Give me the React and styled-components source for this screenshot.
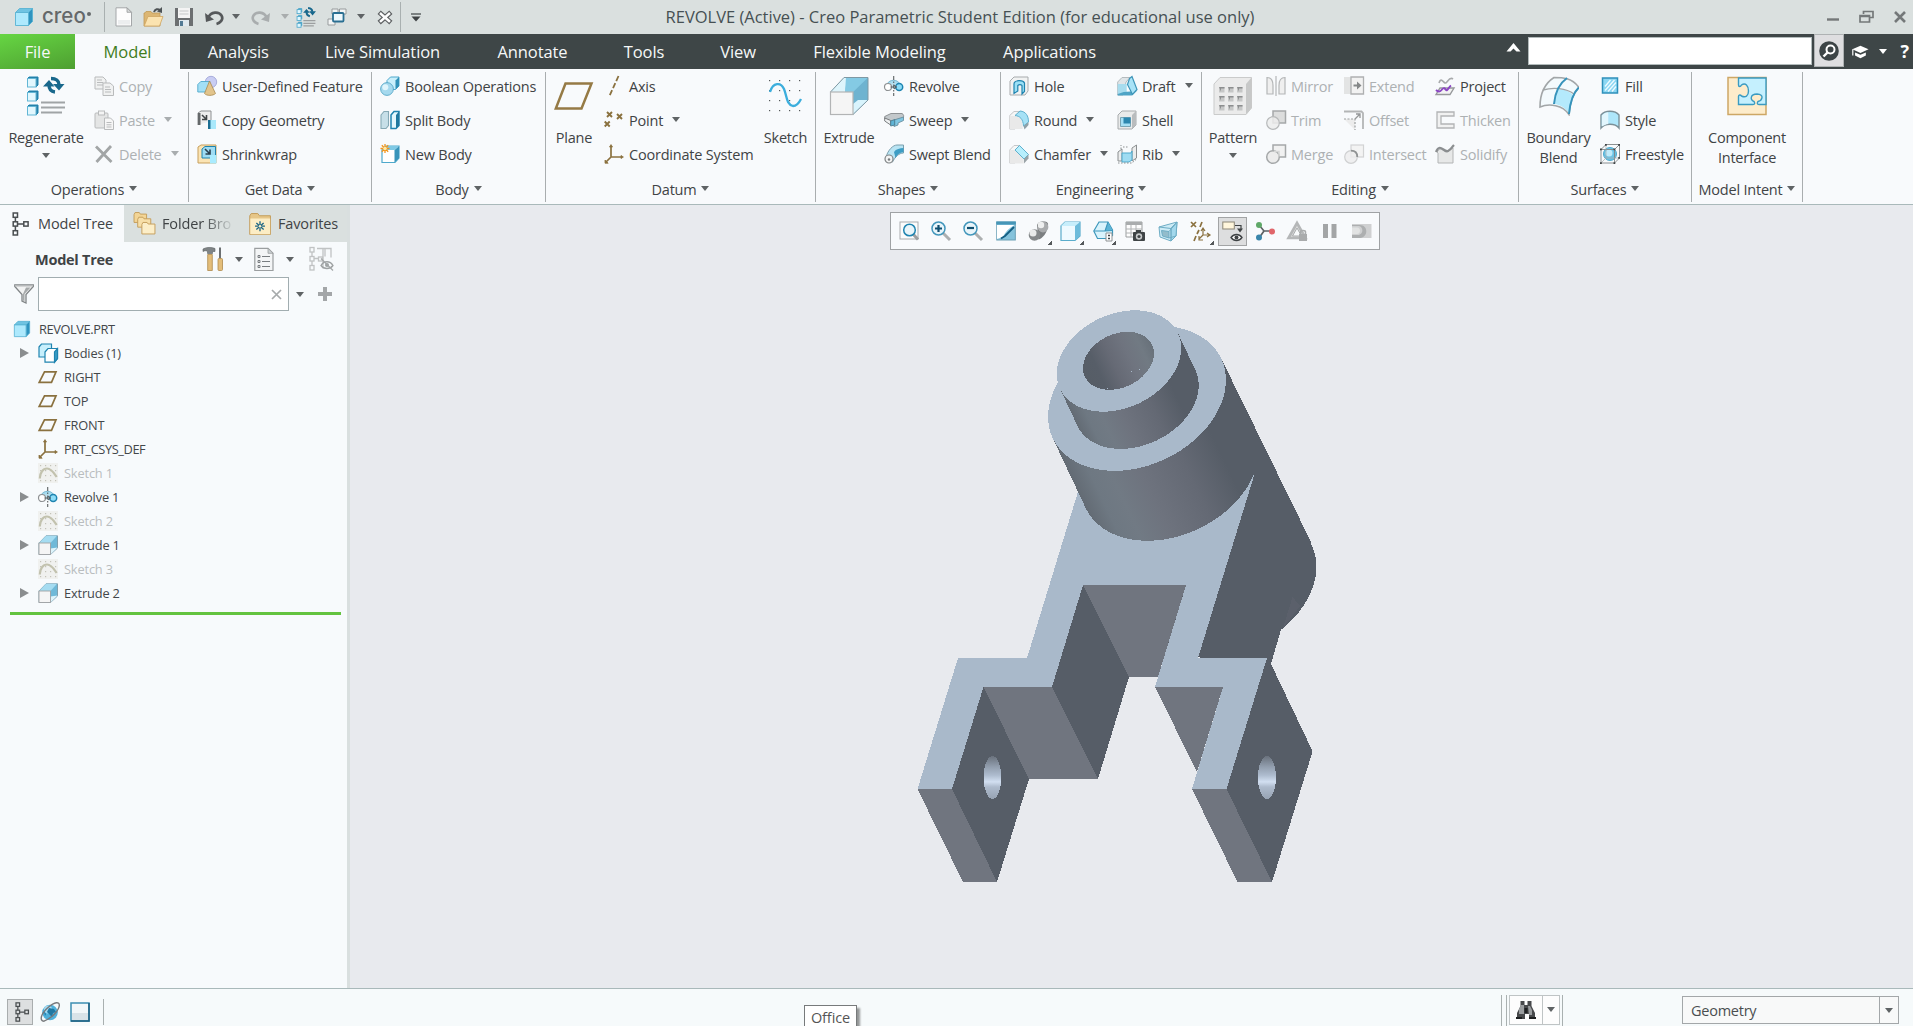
import React from "react";
import styled, { createGlobalStyle } from "styled-components";

const Global = createGlobalStyle`
  * { box-sizing: border-box; }
  html, body { margin: 0; padding: 0; overflow: hidden; }
  body { font-family: "Open Sans", "Noto Sans", sans-serif; color: #3f4345; }
  svg { display: block; flex: none; }
`;

/* ---------- palette ---------- */
const B = "#1f84b0";
const B2 = "#4fa9cc";
const G = "#b9bbbc";
const BR = "#8a713f";

/* ---------- drawings ---------- */
const Cube = ({ x = 1, y = 1, s = 17, d = 4, front = "#aee9fd", side = "#2f93bf", top = "#6fc3e2", line = "#58b2d3" }) => (
  <g strokeWidth="0.9" strokeLinejoin="round">
    <path d={`M${x} ${y + d} l${d} ${-d} h${s - d} l${-d} ${d} z`} fill={top} stroke={line} />
    <path d={`M${x + s - d} ${y + d} l${d} ${-d} v${s - d} l${-d} ${d} z`} fill={side} stroke={line} />
    <rect x={x} y={y + d} width={s - d} height={s - d} fill={front} stroke={line} />
  </g>
);

const art = {
  part: <Cube x={1.5} y={1.5} />,
  fileNew: (
    <g>
      <path d="M2 .8h11l4.500 4.500V19H2z" fill="#fdfdfd" stroke="#a4a7a9" />
      <path d="M13 .8v4.500h4.500z" fill="#d7dadb" stroke="#97999b" strokeWidth=".8" />
      <path d="M4 13h12v4.500H4z" fill="#eceeef" />
    </g>
  ),
  open: (
    <g>
      <path d="M1 19V6h1l1-1.500h5l1 1.500h8v13z" fill="#dcb673" stroke="#c29a55" strokeWidth=".8" />
      <path d="M1.200 19L5 9.500h15L16.500 19z" fill="#fbe3b0" stroke="#cfa662" strokeWidth=".8" />
      <path d="M11 5c1-3 4-3.500 6-2" fill="none" stroke="#4e5355" strokeWidth="2" />
      <path d="M19 0v6l-5-1.500z" fill="#4e5355" />
    </g>
  ),
  save: (
    <g>
      <rect x="1" y="1" width="18" height="18" fill="#6c6f71" />
      <rect x="4" y="1" width="12" height="10" fill="#f4f4f4" />
      <path d="M5.500 4h9M5.500 7h9" stroke="#c6c8c9" />
      <rect x="5" y="13" width="10" height="6" fill="#dfe8ee" />
      <rect x="6" y="14" width="3" height="5" fill="#527a94" />
    </g>
  ),
  undo: (
    <g>
      <path d="M4 11C7 4 15 4.500 17.500 8.500S16 16 12.500 17" fill="none" stroke="#55585a" strokeWidth="2.600" />
      <path d="M1 6l1 9 8-2.500z" fill="#55585a" />
    </g>
  ),
  redo: (
    <g>
      <path d="M16 11C13 4 5 4.500 2.500 8.500S4 16 7.500 17" fill="none" stroke="#a9adae" strokeWidth="2.600" />
      <path d="M19 6l-1 9-8-2.500z" fill="#a9adae" />
    </g>
  ),
  regenSmall: (
    <g>
      {[1.5, 8, 14.5].map((y) => (
        <g key={y}>
          <path d={`M1.500 ${y + 1}l1-1h3v3l-1 1`} fill={B} stroke={B2} strokeWidth=".8" />
          <rect x="1" y={y + 1} width="3.800" height="3.800" fill="#dff6fe" stroke={B2} strokeWidth=".8" />
        </g>
      ))}
      <path d="M10 4.500c0 2.500 1 3.800 3.200 4.300M15.500 4.500c0-2-1.500-3.200-4-3.500" fill="none" stroke="#17678c" strokeWidth="1.900" />
      <path d="M6.800 5.500h6.400L10 2zM12.500 4h6.500l-3.200 4z" fill="#17678c" />
      <path d="M7 13h11.500M7 15.500h11.500M7 18h10" stroke="#9c9fa0" strokeWidth="1.200" />
    </g>
  ),
  windows: (
    <g>
      <path d="M5 2h6v5H5zM12.500 2H19v5h-6.500zM1 12h7v6H1z" fill="#f3f5f5" stroke="#989c9d" />
      <rect x="6" y="6" width="10.500" height="8.500" rx="1" fill="#eef8fc" stroke="#2a6f92" strokeWidth="1.800" />
    </g>
  ),
  closeBox: (
    <g fill="none" strokeLinecap="square">
      <path d="M5.500 6.500l9 8M14.500 6.500l-9 8" stroke="#5d6062" strokeWidth="5.400" />
      <path d="M5.500 6.500l9 8M14.500 6.500l-9 8" stroke="#fdfdfd" strokeWidth="2.800" />
    </g>
  ),
  copy: (
    <g fill="#f0f1f1" stroke={G}>
      <path d="M1 1h8l3 3v9H1z" />
      <path d="M3 4h5M3 6.500h6M3 9h6" />
      <path d="M9 7h7l3.500 3v9.500H9z" />
      <path d="M11 11h5M11 13.500h6M11 16h6" />
    </g>
  ),
  paste: (
    <g fill="#e4e5e5" stroke={G}>
      <rect x="1" y="3" width="13" height="15" rx="1" />
      <rect x="4.500" y="1" width="6" height="4" fill="#f4f4f4" />
      <path d="M10.500 8h6l3 3v8.500h-9z" fill="#f6f6f6" />
      <path d="M12.500 12.500h5M12.500 14.800h5M12.500 17h5" />
    </g>
  ),
  del: <path d="M2 2.500L17.500 18M17 2L2.500 18" stroke="#a2a5a6" strokeWidth="2.800" fill="none" />,
  udf: (
    <g>
      <circle cx="14" cy="6" r="5.700" fill="#c9cdf3" stroke="#9aa0d4" strokeWidth=".8" />
      <path d="M.8 8.500l3-3h9v8l-2.500 2.500H.8z" fill="#a3dff5" stroke={B2} strokeWidth=".9" />
      <path d="M12.500 5L7.500 17.500c2 2.500 8.500 2.500 11 0z" fill="#e2c48c" stroke="#a98a50" strokeWidth=".8" />
    </g>
  ),
  copyGeom: (
    <g>
      <path d="M1 15V3l3-2h10v10" fill="#ededee" stroke="#8c8f91" />
      <path d="M1 3h2.500v12H1z" fill="#64686a" />
      <path d="M5 5l4 4M9.500 5v4.500H5" stroke="#404446" strokeWidth="1.600" fill="none" />
      <path d="M11 19V10h8v9z" fill="#a9e8fb" />
      <path d="M11 19v-9h2.500v9z" fill="#1c6e93" />
    </g>
  ),
  shrink: (
    <g>
      <path d="M1 19V3l3-2h15v18z" fill="#fbe4b4" stroke="#c79f5c" />
      <path d="M5 14V5l3-2.500h10.500V14z" fill="#9fdcf3" stroke={B} />
      <path d="M8 5l5 5M13 5.500V10H8.500" stroke="#2b4150" strokeWidth="1.600" fill="none" />
      <path d="M13 11h6.500v8.500H13z" fill="#a9ebff" />
    </g>
  ),
  boolean: (
    <g>
      <path d="M7 4.500l3.500-3.500H19v9l-3.500 3.500H7z" fill="#c9effb" stroke={B2} />
      <path d="M15.500 4.500L19 1v9l-3.500 3.500z" fill="#3191b8" />
      <circle cx="7" cy="13" r="6.400" fill="#a5d9ee" stroke="#4a9fc2" strokeWidth=".8" />
      <circle cx="5.300" cy="11.200" r="3" fill="#e0f5fc" />
    </g>
  ),
  split: (
    <g strokeWidth="1.100">
      <path d="M1 5l3-3.500h4.500v14L6 18.500H1z" fill="#c7dfe8" stroke="#86a9b5" />
      <path d="M11 5l3-3.500h5v14L16 18.500h-5z" fill="#e3f7fd" stroke={B} strokeWidth="1.500" />
      <path d="M16 5l3-3.500v14l-3 3z" fill="#1f789f" />
    </g>
  ),
  newBody: (
    <g>
      <path d="M2 6l4-4h13v12l-4 4.500H2z" fill="#fff" stroke={B2} strokeWidth="1.200" />
      <path d="M14.500 6L19 2v12l-4.500 4.500z" fill="#3994ba" />
      <path d="M2 6l4-4h13l-4.500 4z" fill="#7fc9e5" />
      <path d="M5 0v9M.5 4.500h9M1.800 1.300l6.400 6.400M8.200 1.300L1.800 7.700" stroke="#f2951d" strokeWidth="1.300" />
      <circle cx="5" cy="4.500" r="1.800" fill="#ffe9a3" />
    </g>
  ),
  axis: <path d="M14.500 0L5.500 20" stroke={BR} strokeWidth="1.800" strokeDasharray="5.500 2.300" />,
  point: (
    <path d="M3 2l5 5M8 2L3 7M13 4l5 5M18 4l-5 5M.7 11.500l5 5M5.700 11.500l-5 5" stroke={BR} strokeWidth="1.900" fill="none" />
  ),
  csys: (
    <g stroke={BR} strokeWidth="1.700" fill="none">
      <path d="M7 2v11h11M7 13l-5.500 5.500" />
      <path d="M5.500 3L7 .6 8.500 3zM17 11.500l2.400 1.500-2.400 1.500zM1 16l0 3.200 3.200 0z" fill={BR} strokeWidth=".8" />
    </g>
  ),
  revolve: (
    <g>
      <path d="M3 8c3-5 10-5 13 0" fill="#a7dcf0" stroke="#76b6cf" />
      <path d="M4 7.500h11v5H4z" fill="#bfe4f1" />
      <circle cx="4" cy="11" r="3.500" fill="#fff" stroke="#8d9092" strokeWidth="1.200" />
      <circle cx="15.200" cy="11" r="3.500" fill="#8dddf8" stroke={B} strokeWidth="1.500" />
      <path d="M9.700 0v20" stroke="#5c6062" strokeDasharray="4 1.500 1.500 1.500" strokeWidth="1.100" />
      <path d="M6.500 11h6M10 9l2.500 2L10 13" stroke="#5a5e60" fill="none" />
    </g>
  ),
  sweep: (
    <g strokeWidth=".9">
      <path d="M.7 6.500L7 3.500h11c2 1 2 3 1 4.500l-6 1.500-5 2L.7 8.500z" fill="#c3c8cb" stroke="#85898b" />
      <path d="M10 10l9.500-3v3.500L14 13v2l-4 1.500z" fill="#7fc6e2" stroke="#6b8f9f" />
      <path d="M.7 8v3l6 4v-4.500z" fill="#eef0f1" stroke="#6e7274" />
      <path d="M6.700 11l4-1.500v5.500l-4 1z" fill="#5fb4d6" stroke="#4c7c90" />
    </g>
  ),
  sweptBlend: (
    <g>
      <path d="M2 13C4 6 9 1 13 1h6.500v8C15 9 11 13 8.500 18z" fill="#b9e4f3" stroke="#7b9fae" />
      <path d="M10 8C12 5 16 4 19.500 4v4c-4 .5-6.500 3-8 6z" fill="#3d9dc4" />
      <circle cx="5" cy="15" r="4" fill="#f3f4f4" stroke="#808486" strokeWidth="1.200" />
      <circle cx="5" cy="15.500" r="1.200" fill="#777b7d" />
    </g>
  ),
  hole: (
    <g>
      <path d="M1 19V5l4-4h14v14l-3 4z" fill="#f1f2f2" stroke="#a8abad" />
      <path d="M5 8c0-4 9-4.500 10.500-1v8.500L13 18V9.500c-1-1.300-3-1.300-4.200 0V15L5 17.500z" fill="#9be0f6" stroke={B} strokeWidth="1.200" />
    </g>
  ),
  round: (
    <g>
      <path d="M.7 5.500L5 1.500h6L6 6v13H.7z" fill="#f6f6f6" stroke="#c5c7c9" />
      <path d="M.7 6h5c6 0 8 5 8 13H.7z" fill="#e9e9e9" />
      <path d="M6 5.500L11 1c6 .5 8.500 5 8.500 11l-5 4C14 9 11 6 6 5.500z" fill="#a5e1f6" stroke="#5fb0ce" />
      <path d="M14.500 16l5-4v3l-4 4.500z" fill="#8ea0a8" />
    </g>
  ),
  chamfer: (
    <g>
      <path d="M.7 6L5 1.500h6L6 6v13H.7z" fill="#f6f6f6" stroke="#c5c7c9" />
      <path d="M.7 6h5l9 8v5.500H.7z" fill="#e9e9e9" />
      <path d="M6 6l4.500-4.500 9 9-4.500 4.500z" fill="#b7effd" stroke="#5fb0ce" />
      <path d="M15 15l4.500-4.500v4L15 19.500z" fill="#9aa3a7" />
    </g>
  ),
  draft: (
    <g>
      <path d="M.7 6L5 1.500h8L9 6l-3 13H.7z" fill="#dfe5e8" stroke="#b4bbbe" />
      <path d="M.7 8h9v8.500L.7 18z" fill="#a7dcee" />
      <path d="M.7 18l6-2 13-1-5 4.500H.7z" fill="#4ea4c6" />
      <path d="M12.500 2.500l2.500-2 5 13-4.500 5-5-10z" fill="#a9e3f7" stroke="#3e95b8" strokeWidth="1.200" />
    </g>
  ),
  shell: (
    <g>
      <path d="M1 19V5l4-4h14v14l-4 4z" fill="#e9eaea" stroke="#a8abad" />
      <path d="M15 5l4-4v14l-4 4z" fill="#b9bcbe" />
      <path d="M3.500 7.500h10v9h-10z" fill="#a6e0f5" stroke="#7ba5b5" />
      <path d="M6.500 7.500h7v6h-7z" fill="#2c87af" />
    </g>
  ),
  rib: (
    <g>
      <path d="M1 8l4-3v12H1zM15 4l4.500-3v13L15 17z" fill="#eceded" stroke="#8b8f91" />
      <path d="M5 9h9l1-2v9l-3 2H5z" fill="#9fdcf2" stroke={B2} />
      <path d="M1 19h14l4.500-4M4 5V1M6 3h6" stroke="#8b8f91" strokeDasharray="1.500 1.500" fill="none" />
    </g>
  ),
  mirror: (
    <g fill="#efefef" stroke="#b4b6b7" strokeWidth="1.200">
      <path d="M1 1.500c5 0 6 4 6 8V18H1zM19 1.500c-5 0-6 4-6 8V18h6z" />
      <path d="M10 0v20" fill="none" />
    </g>
  ),
  trim: (
    <g stroke="#b7b9ba" strokeWidth="1.200">
      <rect x="7" y="1" width="12.500" height="12" fill="#dcdddd" stroke="#a5a8a9" strokeWidth="1.500" />
      <circle cx="7" cy="13" r="6.300" fill="#ececec" fillOpacity=".85" />
    </g>
  ),
  merge: (
    <g stroke="#a5a8a9" strokeWidth="1.500">
      <rect x="7" y="1" width="12.500" height="12" fill="#f1f1f1" />
      <circle cx="7" cy="13" r="6.300" fill="#ececec" />
      <path d="M8 7.500h5v5" fill="none" stroke="#d5d6d6" />
    </g>
  ),
  intersect: (
    <g strokeWidth="1.200">
      <rect x="7" y="1" width="12.500" height="12" fill="#f3f3f3" stroke="#d2d3d4" />
      <circle cx="7" cy="13" r="6.300" fill="#ececec" fillOpacity=".8" stroke="#cfd0d1" />
      <path d="M7 6.700c4 0 6.300 2.500 6.300 6.300" stroke="#8f9293" fill="none" strokeWidth="1.800" />
    </g>
  ),
  extend: (
    <g>
      <rect x="0" y="1" width="8" height="17" fill="#e3e4e4" />
      <path d="M7 1h12.500v17H7z" fill="#f2f2f2" stroke="#aeb0b1" strokeWidth="1.300" />
      <path d="M9.500 9.500h5" stroke="#858889" strokeWidth="2" />
      <path d="M13 5.500l4.500 4-4.500 4z" fill="#858889" />
    </g>
  ),
  offset: (
    <g>
      <path d="M0 1.500h17.500l1.500 1.500V19" fill="none" stroke="#b3b5b6" strokeWidth="1.800" />
      <path d="M0 9h11v11" fill="#ececec" stroke="#9c9fa0" strokeDasharray="2 1.500" strokeWidth="1.200" />
      <path d="M11 9l5-5M12 4h4v4" fill="none" stroke="#949798" strokeWidth="1.300" />
    </g>
  ),
  project: (
    <g fill="none">
      <path d="M4 7c2-6 4-1 6 0s4-7 8-4" stroke="#a8aaac" strokeWidth="1.600" />
      <path d="M1 18.500L5 12h14l-4 6.500z" stroke="#97999b" strokeWidth="1.400" fill="#f3f3f3" />
      <path d="M1 14c2 2 4 2 6-.5s3-1 4 .5 3-3 5-4.500" stroke="#8b46c4" strokeWidth="1.900" />
    </g>
  ),
  thicken: (
    <path d="M2 2h17v4H6v8h13v4H2z" fill="#f1f1f1" stroke="#b2b4b5" strokeWidth="1.300" />
  ),
  solidify: (
    <g>
      <path d="M2 8c4-7 7 1 10 0s3-3 6-4v15H3V9z" fill="#e7e8e8" stroke="#b2b4b5" />
      <path d="M1 8C5-2 9 9 13 7s3-3 6-6" fill="none" stroke="#8b8e90" strokeWidth="2.200" />
    </g>
  ),
  fill: (
    <g>
      <rect x="2.500" y="2" width="15" height="15" fill="#8cd7f3" stroke="#2f90ba" strokeWidth="1.500" />
      <path d="M5 10.500L10.500 4M5 14.500L14.500 4M8 15.500l8-9M12 15.500l4-5" stroke="#eefaff" strokeWidth="1.300" />
    </g>
  ),
  style: (
    <g>
      <path d="M1 5c4-5 14-5 18 0v13c-4-5-14-5-18 0z" fill="#aee6fa" stroke="#7b8f97" strokeWidth="1.400" />
      <path d="M1.800 5.500c2-2.300 4.500-3 6.500-3.200V14c-2.200.3-4.500 1.300-6.500 2.500z" fill="#e2f6fd" />
    </g>
  ),
  freestyle: (
    <g>
      <circle cx="10" cy="10" r="6.500" fill="#6cc4e6" stroke={B2} />
      <circle cx="9" cy="9" r="3.500" fill="#bfeafa" />
      <path d="M1 5.500l5-5h13.500V14l-5 5H1zM1 5.500h13.500V19M14.500 5.500l5-5" fill="none" stroke="#808486" strokeWidth=".9" />
      <path d="M6 .5V14M6 14L1 19M6 14h13.500" fill="none" stroke="#a9acad" strokeWidth=".7" />
      <path d="M0 4.500h1.800v1.800H0zM13.500 4.500h1.800v1.800h-1.800zM18.200 0H20v1.800h-1.800zM5 0h1.800v1.800H5zM0 18.200h1.800V20H0zM13.500 18.200h1.800V20h-1.800zM18.200 13H20v1.800h-1.800z" fill="#3f4345" />
    </g>
  ),
  extrudeSmall: (
    <g strokeWidth=".9">
      <path d="M1 8L8 .8h11.500V13l-7 6.500H1z" fill="#6fb9d8" stroke="#7a9aa7" />
      <path d="M1 8L8 .8h11L12.500 8z" fill="#a5dcf1" />
      <path d="M12.500 19.500v-6l7-1z" fill="#def4fb" />
      <rect x="1" y="8" width="11.500" height="11.500" fill="#f5f5f5" stroke="#9fa2a4" />
    </g>
  ),
  plane: <path d="M6.500 4.800H18l-4.500 10.500H1.200z" fill="none" stroke={BR} strokeWidth="1.700" />,
  bodies: (
    <g strokeWidth="1.200" stroke={B}>
      <path d="M1 4l2.500-3h10v9l-3 4H1z" fill="#c7effc" />
      <path d="M7 9l3-3.500h9.500v10l-3 3.700H7z" fill="#fff" />
      <path d="M16.500 9l3-3.500v10l-3 3.700z" fill="#3a9cc4" />
    </g>
  ),
  sketchDim: (
    <g>
      <rect width="20" height="20" fill="#f0f1ef" />
      {[2, 7, 12, 17].map((x) => [2, 7, 12, 17].map((y) => <rect key={x + "-" + y} x={x} y={y} width="1.200" height="1.200" fill="#c3c3b8" />))}
      <path d="M1.800 15.500C2 9.500 5 5.500 9 5.500c4.500 0 7 4.500 9.700 8.500" fill="none" stroke="#c2c2ae" strokeWidth="2.200" />
    </g>
  ),
  treeIcon: (
    <g fill="none" stroke="#4a4e50" strokeWidth="1.500">
      <rect x="1.200" y="-1" width="4.300" height="4.300" />
      <rect x="1.200" y="7.800" width="4.300" height="4.300" />
      <rect x="1.200" y="16.700" width="4.300" height="4.300" />
      <rect x="11.800" y="7.800" width="4.300" height="4.300" />
      <path d="M3.400 3.300v4.500M3.400 12.100v4.600M5.500 10h6.300" />
    </g>
  ),
  folders: (
    <g stroke="#c39d5b" strokeWidth=".9">
      <path d="M0 1.500l1-2h4l1 1.500h6v8H0z" fill="#f3d596" />
      <path d="M3.500 6l1-2h4l1 1.500h6.500v8H3.500z" fill="#f7dfa9" />
      <path d="M7.500 11l1-2h4l1 1.500H20V20H7.500z" fill="#fceec8" />
    </g>
  ),
  favorites: (
    <g>
      <path d="M.7 2.500L2 .5h6L9.500 2.500h10v17H.7z" fill="#e6c688" stroke="#c39d5b" strokeWidth=".9" />
      <rect x="1.200" y="5" width="18" height="14.300" fill="#fcedc5" />
      <path d="M10 7.500v9M6.700 9l6.600 6M13.300 9l-6.600 6M5.500 12h9" stroke="#1c6584" strokeWidth="1.200" />
      <circle cx="10" cy="12" r="1.200" fill="#fcedc5" />
    </g>
  ),
  tools: (
    <g>
      <path d="M0 1.500c3-2 9-2 12-.5v3h-2.500v2h-5V4c-1-1-3-1-4.500 0z" fill="#7f8486" stroke="#5d6163" strokeWidth=".6" />
      <path d="M4.700 7h4.600v16H4.700z" fill="#e3bd79" stroke="#ae8a4c" strokeWidth=".8" />
      <path d="M17 0v11" stroke="#6c7072" strokeWidth="2" />
      <rect x="15" y="11" width="4.500" height="12" rx="1" fill="#e3bd79" stroke="#ae8a4c" strokeWidth=".8" />
    </g>
  ),
  listDoc: (
    <g>
      <path d="M.8.8H14l5 5V23H.8z" fill="#f3f5f6" stroke="#9a9ea0" strokeWidth="1.200" />
      <path d="M14 .8v5h5z" fill="#cdd2d4" stroke="#9a9ea0" strokeWidth=".8" />
      <path d="M8 9h8M8 14h8M8 19h8" stroke="#787d80" strokeWidth="1.200" />
      <path d="M4 8h2v2H4zM4 13h2v2H4zM4 18h2v2H4z" fill="none" stroke="#787d80" />
    </g>
  ),
  treeEye: (
    <g fill="none" stroke="#c0c3c4" strokeWidth="1.300">
      <rect x="1" y="0" width="4" height="4.500" />
      <rect x="1" y="9" width="4" height="4.500" />
      <rect x="1" y="18" width="4" height="4.500" />
      <path d="M3 4.500V9M3 13.500V18M5 11h5M8 1h6v20M8 1h14v9M16 1v8" />
      <rect x="9.500" y="9.500" width="4" height="4" />
      <path d="M12 18c3-5 9-5 12 0-3 4-9 4-12 0z" stroke="#9ea2a3" />
      <circle cx="18" cy="17.500" r="2" fill="#9ea2a3" stroke="none" />
      <path d="M12 11l12 12" stroke="#a3a7a8" />
    </g>
  ),
  funnel: (
    <g>
      <path d="M.8 1h18.500v1.500L12 10.500V19l-4-2v-6.500L.8 2.500z" fill="#f1f2f2" stroke="#818587" strokeWidth="1.300" />
      <path d="M1 1h18v1.500H1z" fill="#b6b9ba" />
      <path d="M10.500 10l6-6.500H12L9 10v6.500l1.500.8z" fill="#a6a9aa" />
    </g>
  ),
  zoomFit: (
    <g>
      <rect x="1" y="1" width="18" height="17" fill="#fcfcfc" stroke="#a9acae" />
      <path d="M14 13l5 5.500" stroke="#9c9fa1" strokeWidth="3" />
      <circle cx="10.500" cy="9" r="5.800" fill="#e9f5fa" stroke={B} strokeWidth="1.500" />
    </g>
  ),
  zoomIn: (
    <g>
      <path d="M12 12l7 7" stroke="#acafb0" strokeWidth="3" />
      <circle cx="7.500" cy="7.500" r="6.500" fill="#e9f5fa" stroke="#4296bb" strokeWidth="1.500" />
      <path d="M7.500 4v7M4 7.500h7" stroke="#104f70" strokeWidth="2.200" />
    </g>
  ),
  zoomOut: (
    <g>
      <path d="M12 12l7 7" stroke="#acafb0" strokeWidth="3" />
      <circle cx="7.500" cy="7.500" r="6.500" fill="#e9f5fa" stroke="#4296bb" strokeWidth="1.500" />
      <path d="M4 7h7" stroke="#104f70" strokeWidth="2.200" />
    </g>
  ),
  repaint: (
    <g>
      <rect x=".8" y="1" width="18.500" height="18" fill="#85c3dc" stroke="#6a9fb4" />
      <rect x=".3" y=".5" width="19.500" height="3" fill="#4796b7" />
      <path d="M1 4h17.500C13 7 9 11 7 16l-6 2z" fill="#fff" />
      <path d="M18 6L9 15l-4 2.500" stroke="#155f83" strokeWidth="1.800" fill="none" />
    </g>
  ),
  display: (
    <g>
      <path d="M9 4c1-3 4-4 6-3.500 5 0 6 2 4.500 5 0 6-5 12-9 13z" fill="#7b7e80" />
      <circle cx="15" cy="6" r="5.400" fill="#a9abad" />
      <circle cx="6.500" cy="14" r="5.800" fill="#85888a" />
      <circle cx="5" cy="12" r="3.500" fill="#e9eaea" />
      <circle cx="13" cy="4" r="3.200" fill="#eeefef" />
    </g>
  ),
  orient: (
    <g>
      <path d="M1 5l4-4h15v14l-5 4.500H1z" fill="#eefaff" stroke="#5aaccb" strokeWidth="1.200" />
      <path d="M1 5l4-4h15l-5 4z" fill="#c7eefb" />
      <path d="M15 5l5-4v14l-5 4.500z" fill="#6dbcdb" />
    </g>
  ),
  viewMgr: (
    <g>
      <path d="M.8 10L6 1h9l4.500 8v5.500L15 17.500H4.500z" fill="#d9f3fc" stroke="#3d97bb" strokeWidth="1.200" />
      <path d="M15 1l4.500 8.500L12 10z" fill="#5db4d6" />
      <path d="M1 10h11l7.500-.5M12 10l3-9" stroke="#3d97bb" strokeWidth="1.100" fill="none" />
      <path d="M13 12h6v8h-6z" fill="#fff" stroke="#8d9193" />
      <path d="M15 14.500h2M15 17.500h2" stroke="#3f4345" strokeWidth="1.500" />
    </g>
  ),
  camera: (
    <g>
      <path d="M1 1h16v15H1z" fill="#fdfdfd" stroke="#9b9e9f" />
      <path d="M1 1h16v3H1z" fill="#a9acad" />
      <path d="M1 8h16M1 12h10M6 4v12M11 4v8" stroke="#b0b3b4" />
      <rect x="8" y="11" width="12" height="9" rx="1" fill="#3f4446" />
      <circle cx="14" cy="15.500" r="3.200" fill="#c7cacb" />
      <circle cx="14" cy="15.500" r="1.600" fill="#3f4446" />
      <rect x="11" y="9" width="5" height="2.500" fill="#3f4446" />
    </g>
  ),
  perspective: (
    <g fill="#cdebf6" stroke="#6eadc5" strokeWidth="1">
      <path d="M1 6L19 1l-1 14-5 5-11-4z" />
      <path d="M3.500 9.500l7.500 1v6.500l-6.500-2z" fill="#93bccb" />
      <path d="M13 7.500L19 1l-1 14-5 5z" fill="#a3d8ec" />
      <path d="M1 6l12 1.500L19 1M13 7.500V20M19 1L11 10.500M18 15l-7 2" fill="none" />
    </g>
  ),
  datum: (
    <g stroke={BR} strokeWidth="1.700" fill="none">
      <path d="M1 1l5 5M6 1L1 6M12 1l-2 5M9 9l-2 4M6 15l-2 5" />
      <path d="M13 8v6h6M13 14l-4 4M11 10l2-3 2 3M17 12l3 2-3 2M9 15l0 4 4 0" strokeWidth="1.200" />
    </g>
  ),
  annot: (
    <g>
      <rect x=".8" y="1" width="11.500" height="7" fill="#fff6dc" stroke="#8b8576" />
      <path d="M13 4.500h6V8" fill="none" stroke="#3f4345" strokeWidth="1.200" />
      <path d="M15 7.500h6l-3 4z" fill="#3f4345" />
      <path d="M9 16.500c3-4 8-4 11 0-3 4-8 4-11 0z" fill="#fff" stroke="#3f4345" strokeWidth="1.300" />
      <circle cx="14.500" cy="16.500" r="2" fill="#3f4345" />
    </g>
  ),
  spin: (
    <g>
      <path d="M4 4l5 6 8 0M9 10l-5 7" stroke="#5e6264" strokeWidth="1.700" fill="none" />
      <circle cx="4" cy="4" r="3" fill="#5fa868" />
      <circle cx="17" cy="10.500" r="3" fill="#e0656a" />
      <circle cx="4" cy="16.500" r="3" fill="#3a86ab" />
    </g>
  ),
  warn: (
    <g>
      <path d="M10 2l8.500 15H1.500z" fill="#dcdddd" stroke="#b5b7b8" strokeWidth="2.600" />
      <path d="M10 7l4.500 8h-9z" fill="#f8fafb" stroke="#a9abac" />
      <rect x="12" y="13" width="8" height="7" fill="#a9abac" />
      <path d="M13.500 13v-2c0-2 5-2 5 0v2" fill="none" stroke="#a9abac" strokeWidth="1.500" />
    </g>
  ),
  pause: <path d="M3 3h5v14H3zM11.500 3h5v14h-5z" fill="#a3a5a6" />,
  stop: (
    <g>
      <rect x="0" y="3" width="19.500" height="14" fill="#cfd0d1" />
      <path d="M0 5h7c4 1 5 7 0 9H0v3h8c9-1 8-13 0-13H0z" fill="#adafb0" />
      <path d="M0 6.500h5c4 0 4 6.500 0 6.500H0z" fill="#e2e3e3" />
    </g>
  ),
  globe: (
    <g>
      <circle cx="10" cy="10.500" r="7.800" fill="#4fb0da" />
      <circle cx="8" cy="7.500" r="4" fill="#a3d9ef" />
      <path d="M9 6l5 1 2 3-3 1-1 4-3-3-2-2zM4 9l2 3-1 2z" fill="#2078a3" />
      <path d="M4 19.200C-1 19 1 11.500 8 5.500S19.500-.5 19.300 3.500 13 15.500 4 19.200z" fill="none" stroke="#77797c" strokeWidth="1.400" />
    </g>
  ),
  panel: (
    <g>
      <rect x="1" y="1" width="18" height="18" fill="#f2f7f9" stroke="#3c8fb3" strokeWidth="1.500" />
      <path d="M2 11h16v7H2z" fill="#d9e3e8" />
      <path d="M19 1v18H1" fill="none" stroke="#1d5f80" strokeWidth="1.500" />
    </g>
  ),
  binoculars: (
    <g>
      <path d="M4.500 1h4v4h3V1h4v5l3.500 7v6h-6v-5H9v5H1v-6l3.500-7z" fill="#47494b" />
      <path d="M3 9l2-4h3v9H3zM12 6h2l2 4v5h-3z" fill="#9a9d9f" />
      <path d="M8.500 8h3v5h-3zM0 17h6v2H0zM13 17h7v2h-7z" fill="#1d1f20" />
    </g>
  ),
  magnifier: (
    <g>
      <circle cx="10" cy="10" r="9.800" fill="#3c4446" />
      <circle cx="11.500" cy="8.500" r="4" fill="none" stroke="#fff" strokeWidth="2" />
      <path d="M8.500 11.500L4.500 15.500" stroke="#fff" strokeWidth="2.400" />
    </g>
  ),
  cap: (
    <g fill="#fff">
      <path d="M10.500 3l9 4-9 4-9-4z" />
      <path d="M4.500 10.500l6 2.500 6-2.500v3.500l-6 3-6-3z" />
      <path d="M2 7v7" stroke="#fff" strokeWidth="1.300" />
    </g>
  ),
};

const bigArt = {
  regenerate: (
    <g>
      {[0, 14, 28].map((y) => (
        <g key={y} strokeWidth="1">
          <path d={`M1 ${y + 3}l2-2h9v8l-2 2`} fill="#2a7fa5" stroke={B} />
          <rect x="1.500" y={y + 2.500} width="8.500" height="8.500" fill="#e2f7fe" stroke="#63b6d5" />
        </g>
      ))}
      <path d="M23 9c0 4 2 6.500 6 7M33 8.500c0-4-3-6-8-6" fill="none" stroke="#19688c" strokeWidth="3.400" />
      <path d="M17 10.500h11.500L23 4zM27 8h11.500l-5.500 6.500z" fill="#19688c" />
      <path d="M15 26.500h24M15 31.500h24M15 36.500h21" stroke="#a0a4a6" strokeWidth="1.800" />
    </g>
  ),
  plane: <path d="M11.500 7.500H37.500L27.500 32.500H1.800z" fill="none" stroke="#957a45" strokeWidth="2.500" />,
  sketch: (
    <g>
      {[3, 13, 23, 33].map((x) => [4, 14, 24, 34].map((y) => <rect key={x + "-" + y} x={x} y={y} width="1.200" height="1.200" fill="#55595b" />))}
      <path d="M4 16C7 6 15 6 18 13s2 15 9 17c4 0 6-3 8-7" fill="none" stroke="#3caedd" strokeWidth="2.300" />
    </g>
  ),
  extrude: (
    <g>
      <path d="M1.500 16L15 1.500h24V24L24 38.500z" fill="#8fcfe6" />
      <path d="M1.500 16L15 1.500h2V9l-1 7z" fill="#def5fc" />
      <path d="M17 1.500h22L24 16h-8z" fill="#84cae4" />
      <path d="M39 1.500V24L24 38.500V16z" fill="#6eb3d0" />
      <path d="M24 38.500V28l5-4h10z" fill="#d9f4fd" />
      <path d="M1.500 16L15 1.500h24V24L24 38.500" fill="none" stroke="#7f98a3" />
      <rect x="1.500" y="16" width="22.500" height="22.500" fill="#f5f5f5" stroke="#b2b4b5" strokeWidth="1.200" />
    </g>
  ),
  pattern: (
    <g>
      <path d="M1 8l6-6.500h31.500V32L33 38.500H1z" fill="#ebebeb" stroke="#cacbcb" />
      <path d="M33 8l5.500-6.500V32L33 38.500z" fill="#c7c8c8" />
      {[6, 15, 24].map((x) => [11, 20, 29].map((y) => (
        <g key={x + "-" + y}>
          <rect x={x} y={y} width="5.500" height="5.500" fill="#c6c7c7" />
          <path d={`M${x} ${y}h5.500v1.500h-3.500v3z`} fill="#8c8e8f" />
        </g>
      )))}
    </g>
  ),
  boundary: (
    <g>
      <path d="M1 31C1 15 8 6 15 1.500c8 0 18 0 25 10C34 17 31 27 30 38.500 24 29 10 27 1 31z" fill="#f3fafd" stroke="#a2a6a8" strokeWidth="1.600" />
      <path d="M19 13c6 0 11 2 15 6-2 6-4 12-4 18-4-5-8-8-14-9 0-6 1-10 3-15z" fill="#b4eafc" />
      <path d="M4 14c10-3 23-2 31 4" stroke="#a2a6a8" strokeWidth="1.400" fill="none" />
      <path d="M28 2c-7 5-12 14-13 26M39.800 11.500C34 17 31 27 30 38" stroke="#3693bb" strokeWidth="2" fill="none" />
    </g>
  ),
  puzzle: (
    <g>
      <rect x="1" y="1.500" width="38" height="37" fill="#fdeccb" stroke="#cda765" strokeWidth="1.500" />
      <path d="M11.500 2H39v26.500h-7c-2 0-2-1.500-1-3 4-1 7-7-1-7.500-7 0-7 6-3 7.500 1 1.500 1 3-1 3H11.500v-8c0-2 2-2 3-.5 4 2 7 0 7-5s-3-9-7-6c-1 2-3 2-3 0z" fill="#c5f0fe" stroke="#3a9bc2" strokeWidth="1.400" />
    </g>
  ),
};

const Icon = ({ name, w = 20, h, vb }) => (
  <svg width={w} height={h || w} viewBox={vb || "0 0 20 20"} overflow="visible">{art[name]}</svg>
);
const BigIcon = ({ name }) => <svg width="40" height="40" viewBox="0 0 40 40">{bigArt[name]}</svg>;

const Arrow = styled.i`
  flex: none;
  width: 0;
  height: 0;
  margin: 0 ${(p) => p.$mr || 0}px ${(p) => p.$mb || 0}px ${(p) => p.$ml || 0}px;
  border: 4.500px solid transparent;
  border-left-width: 4.500px;
  border-top: 5px solid ${(p) => p.$c || "#5f6365"};
  border-bottom: 0;
`;

/* ---------- title bar ---------- */
const Screen = styled.div`
  width: 1913px;
  height: 1026px;
  display: flex;
  flex-direction: column;
  background: #f7fafc;
  overflow: hidden;
`;
const TitleBar = styled.header`
  height: 34px;
  flex: none;
  background: #dae0df;
  display: grid;
  grid-template-columns: 560px 1fr 560px;
  align-items: center;
`;
const QuickBar = styled.div`
  display: flex;
  align-items: center;
  height: 34px;
  padding-left: 14px;
`;
const Slot = styled.div`
  flex: none;
  display: flex;
  justify-content: ${(p) => p.$justify || "center"};
  align-items: center;
  width: ${(p) => p.$w}px;
`;
const Logo = styled.span`
  font: 500 20.500px/24px Inter, sans-serif;
  color: #64686a;
  padding-bottom: 3px;
`;
const LogoDot = styled.i`
  width: 4px;
  height: 4px;
  border-radius: 50%;
  background: #64686a;
  margin: -6px 0 0 1px;
`;
const VLine = styled.i`
  flex: none;
  width: 1px;
  height: ${(p) => p.$h || 30}px;
  margin: 0 ${(p) => p.$mr || 0}px 0 ${(p) => p.$ml || 0}px;
  background: #a9b0b0;
`;
const Title = styled.h1`
  margin: 0;
  text-align: center;
  font-weight: 400;
  font-size: 16.500px;
  letter-spacing: -0.010px;
  line-height: 34px;
  color: #465053;
  white-space: nowrap;
  padding-left: 7px;
`;
const WindowButtons = styled.div`
  display: flex;
  justify-content: flex-end;
  align-items: center;
  gap: 20px;
  padding-right: 7px;
`;

/* ---------- tab bar ---------- */
const TabBar = styled.nav`
  height: 35px;
  flex: none;
  display: flex;
  background: #3e4647;
`;
const Tab = styled.div`
  flex: none;
  width: ${(p) => p.$w}px;
  text-align: center;
  font-size: 16.500px;
  letter-spacing: -0.100px;
  line-height: 36px;
  white-space: nowrap;
  color: ${(p) => (p.$active ? "#417d1d" : "#f6f8f8")};
  background: ${(p) => (p.$file ? "linear-gradient(165deg, #66d643, #4e9f31)" : p.$active ? "#f8fafc" : "transparent")};
`;
const TabTools = styled.div`
  margin-left: auto;
  display: flex;
  align-items: center;
  color: #fff;
  padding-right: 4px;
`;
const Caret = styled.svg`
  margin-bottom: 8px;
`;
const SearchBox = styled.div`
  width: 284px;
  height: 28px;
  background: #fff;
  border: 1px solid #b2bbbb;
  margin: -1px 2px 0 7px;
`;
const SearchButton = styled.div`
  width: 30px;
  height: 33px;
  margin: -2px 7px 0 0;
  display: grid;
  place-items: center;
  background: #dedee0;
  border: 1px solid #aeb2b3;
`;
const Help = styled.span`
  font-size: 18px;
  font-weight: 700;
  line-height: 30px;
  margin: -2px 0 0 13px;
`;

/* ---------- ribbon ---------- */
const Ribbon = styled.section`
  height: 136px;
  flex: none;
  display: flex;
  padding-top: 3px;
  background: #f8fafc;
  border-bottom: 1px solid #a9b9ba;
`;
const Group = styled.div`
  flex: none;
  width: ${(p) => p.$w}px;
  height: 130px;
  display: flex;
  flex-direction: column;
  border-right: 1px solid #a9adaf;
`;
const GroupBody = styled.div`
  height: 100px;
  display: flex;
  padding-left: ${(p) => p.$pl}px;
`;
const GroupName = styled.div`
  height: 30px;
  display: flex;
  align-items: center;
  justify-content: center;
  font-size: 14.500px;
  letter-spacing: -0.220px;
  padding-top: 5px;
  white-space: nowrap;
`;
const Column = styled.div`
  flex: none;
  width: ${(p) => p.$w}px;
  display: flex;
  flex-direction: column;
  margin-top: -3px;
  padding-left: ${(p) => p.$pad || 0}px;
`;
const Command = styled.div`
  height: 34px;
  display: flex;
  align-items: center;
  gap: 5px;
  white-space: nowrap;
  font-size: 14.500px;
  letter-spacing: -0.210px;
  color: ${(p) => (p.$off ? "#adb1b3" : "#3f4345")};
`;
const BigCommand = styled.div`
  flex: none;
  width: ${(p) => p.$w}px;
  display: flex;
  flex-direction: column;
  align-items: center;
  padding-top: 4px;
  text-align: center;
  font-size: 14.500px;
  letter-spacing: -0.220px;
  line-height: 20px;
  white-space: pre;
`;
const BigLabel = styled.span`
  margin: 12px 0 5px;
`;

const groups = [
  { w: 189, pl: 3, name: "Operations", cols: [
    { big: "regenerate", label: "Regenerate", w: 86, arrow: 1 },
    { w: 100, items: [["copy", "Copy", 0, 1], ["paste", "Paste", 1, 1], ["del", "Delete", 1, 1]], pad: 5 },
  ] },
  { w: 183, pl: 8, name: "Get Data", cols: [{ w: 170, items: [["udf", "User-Defined Feature"], ["copyGeom", "Copy Geometry"], ["shrink", "Shrinkwrap"]] }] },
  { w: 174, pl: 8, name: "Body", cols: [{ w: 160, items: [["boolean", "Boolean Operations"], ["split", "Split Body"], ["newBody", "New Body"]] }] },
  { w: 270, pl: 3, name: "Datum", cols: [
    { big: "plane", label: "Plane", w: 50 },
    { w: 156, pad: 5, items: [["axis", "Axis"], ["point", "Point", 1], ["csys", "Coordinate System"]] },
    { big: "sketch", label: "Sketch", w: 61 },
  ] },
  { w: 185, pl: 3, name: "Shapes", cols: [
    { big: "extrude", label: "Extrude", w: 60 },
    { w: 115, pad: 5, items: [["revolve", "Revolve"], ["sweep", "Sweep", 1], ["sweptBlend", "Swept Blend"]] },
  ] },
  { w: 201, pl: 8, name: "Engineering", cols: [
    { w: 108, items: [["hole", "Hole"], ["round", "Round", 1], ["chamfer", "Chamfer", 1]] },
    { w: 84, items: [["draft", "Draft", 1], ["shell", "Shell"], ["rib", "Rib", 1]] },
  ] },
  { w: 317, pl: 3, name: "Editing", cols: [
    { big: "pattern", label: "Pattern", w: 56, arrow: 1 },
    { w: 83, pad: 5, items: [["mirror", "Mirror", 0, 1], ["trim", "Trim", 0, 1], ["merge", "Merge", 0, 1]] },
    { w: 91, items: [["extend", "Extend", 0, 1], ["offset", "Offset", 0, 1], ["intersect", "Intersect", 0, 1]] },
    { w: 80, items: [["project", "Project"], ["thicken", "Thicken", 0, 1], ["solidify", "Solidify", 0, 1]] },
  ] },
  { w: 173, pl: 3, name: "Surfaces", cols: [
    { big: "boundary", label: "Boundary\nBlend", w: 73 },
    { w: 95, pad: 5, items: [["fill", "Fill"], ["style", "Style"], ["freestyle", "Freestyle"]] },
  ] },
  { w: 111, pl: 5, name: "Model Intent", cols: [{ big: "puzzle", label: "Component\nInterface", w: 100 }] },
];

const RibbonGroup = ({ g }) => (
  <Group $w={g.w}>
    <GroupBody $pl={g.pl}>
      {g.cols.map((c, i) =>
        c.big ? (
          <BigCommand key={i} $w={c.w}>
            <BigIcon name={c.big} />
            <BigLabel>{c.label}</BigLabel>
            {c.arrow ? <Arrow /> : null}
          </BigCommand>
        ) : (
          <Column key={i} $w={c.w} $pad={c.pad}>
            {c.items.map(([icon, label, arrow, off]) => (
              <Command key={label} $off={off}>
                <Icon name={icon} />
                {label}
                {arrow ? <Arrow $ml={4} $mb={2} $c={off ? "#a9adaf" : "#5f6365"} /> : null}
              </Command>
            ))}
          </Column>
        )
      )}
    </GroupBody>
    <GroupName>{g.name}<Arrow $ml={5} $mb={3} /></GroupName>
  </Group>
);

/* ---------- work area ---------- */
const Work = styled.main`
  flex: 1;
  display: flex;
  min-height: 0;
`;
const Sidebar = styled.aside`
  flex: none;
  width: 350px;
  border-right: 3px solid #d9dfdf;
  background: #f7fafc;
  display: flex;
  flex-direction: column;
`;
const SideTabs = styled.div`
  display: flex;
  height: 37px;
  background: #dae0df;
`;
const SideTab = styled.div`
  flex: none;
  width: ${(p) => p.$w}px;
  display: flex;
  align-items: center;
  gap: ${(p) => p.$gap}px;
  padding-left: ${(p) => p.$pl}px;
  background: ${(p) => (p.$active ? "#f8fafc" : "transparent")};
  font-size: 14.500px;
  letter-spacing: -0.150px;
  white-space: nowrap;
`;
const Fade = styled.span`
  width: 69px;
  mask-image: linear-gradient(90deg, #000 60%, transparent 105%);
`;
const SideHead = styled.div`
  display: flex;
  align-items: center;
  height: 35px;
  padding-left: 35px;
`;
const SideTitle = styled.b`
  width: 168px;
  font-size: 14.500px;
  letter-spacing: -0.260px;
`;
const FilterRow = styled.div`
  display: flex;
  align-items: center;
  height: 34px;
  padding-left: 14px;
`;
const FilterInput = styled.div`
  width: 251px;
  height: 34px;
  margin-left: 4px;
  padding-right: 6px;
  border: 1px solid #a1adb0;
  background: #fff;
  display: flex;
  align-items: center;
  justify-content: flex-end;
`;
const Tree = styled.ul`
  list-style: none;
  margin: 6px 0 0;
  padding: 0 0 7px;
`;
const Node = styled.li`
  height: 24px;
  display: flex;
  align-items: center;
  gap: ${(p) => (p.$root ? 8 : 6)}px;
  padding-left: ${(p) => (p.$root ? 13 : 20)}px;
  font-size: 12.800px;
  letter-spacing: ${(p) => (p.$caps ? -0.4 : -0.15)}px;
  color: ${(p) => (p.$off ? "#b9bdbf" : "#43474a")};
`;
const Expander = styled.i`
  width: 9px;
  height: 10px;
  margin-right: 3px;
  border-left: 9px solid ${(p) => (p.$on ? "#8a8d8f" : "transparent")};
  border-top: 5px solid transparent;
  border-bottom: 5px solid transparent;
`;
const InsertLine = styled.div`
  height: 3px;
  margin: 0 6px 0 10px;
  background: #63c33f;
`;

const nodes = [
  ["bodies", "Bodies (1)", 1],
  ["plane", "RIGHT"],
  ["plane", "TOP"],
  ["plane", "FRONT"],
  ["csys", "PRT_CSYS_DEF"],
  ["sketchDim", "Sketch 1", 0, 1],
  ["revolve", "Revolve 1", 1],
  ["sketchDim", "Sketch 2", 0, 1],
  ["extrudeSmall", "Extrude 1", 1],
  ["sketchDim", "Sketch 3", 0, 1],
  ["extrudeSmall", "Extrude 2", 1],
];

const Viewport = styled.div`
  flex: 1;
  display: flex;
  flex-direction: column;
  align-items: center;
  background: #e8eaee;
  padding-top: 7px;
`;
const ViewTools = styled.div`
  width: 490px;
  height: 38px;
  display: flex;
  align-items: center;
  padding-left: 3px;
  margin-left: 7px;
  border: 1px solid #9fa2a4;
  background: #f8fafc;
`;
const ViewTool = styled.div`
  flex: none;
  width: 29px;
  height: 29px;
  margin-right: 3.400px;
  display: grid;
  place-items: center;
  border: 1px solid ${(p) => (p.$on ? "#a2a4a5" : "transparent")};
  background: ${(p) => (p.$on ? "#dddedf" : p.$more ? "linear-gradient(135deg, transparent 48%, #55595b 50%) 23px 23px / 4px 4px no-repeat" : "transparent")};
`;
const viewTools = [
  ["zoomFit"], ["zoomIn"], ["zoomOut"], ["repaint"], ["display", 1], ["orient", 1], ["viewMgr", 1], ["camera"],
  ["perspective"], ["datum", 1], ["annot", 0, 1], ["spin"], ["warn"], ["pause"], ["stop"],
];

const CX = "#a9b9ca";
const DK = "#565d67";
const MD = "#70757f";
const rim = { rx: 93.2, ry: 66.9 };

const shade = [[0, "#636b74"], [0.1, "#6e7882"], [0.2, "#717a84"], [0.35, "#6e737e"], [0.58, "#646974"], [0.78, DK], [1, DK]];
const boreShade = [[0, "#565d66"], [0.2, "#575e68"], [0.42, "#666a75"], [0.65, "#6f747f"], [0.85, "#717a83"], [1, "#68717a"]];
const stops = (list) => list.map(([o, c]) => <stop key={o} offset={o} stopColor={c} />);

const PartModel = () => (
  <svg width="440" height="640" viewBox="900 290 440 640" shapeRendering="crispEdges">
    <defs>
      <linearGradient id="tube" gradientUnits="userSpaceOnUse" x1="1052.800" y1="438.400" x2="1221.200" y2="358.400">{stops(shade)}</linearGradient>
      <linearGradient id="boss" gradientUnits="userSpaceOnUse" x1="1060.100" y1="389" x2="1177.900" y2="333">{stops(shade)}</linearGradient>
      <linearGradient id="bore" gradientUnits="userSpaceOnUse" x1="-37.300" y1="0" x2="37.300" y2="0">{stops(boreShade)}</linearGradient>
      <linearGradient id="pin" x1="0" y1="0" x2="0" y2="1">
        <stop offset="0" stopColor="#69717c" />
        <stop offset=".25" stopColor="#929eae" />
        <stop offset=".45" stopColor="#aebccf" />
        <stop offset=".6" stopColor="#d2dff1" />
        <stop offset=".72" stopColor="#aebbcd" />
        <stop offset="1" stopColor="#97a3b3" />
      </linearGradient>
    </defs>
    <ellipse {...rim} transform="translate(1227.500 585) rotate(-25.400)" fill={DK} />
    <path d="M1221.200 358.400L1311.500 543 1143 625 1052.800 438.400z" fill={DK} />
    <path d="M1254 474L1292 590 1281 629.500 1271 664 1198 664z" fill={DK} />
    <path d="M1292.500 597L1300 606 1283 628z" fill="#5b606b" />
    <path d="M1078.500 490L1027 658H958L917.500 789H952L983.500 687H1052L1083 585H1186L1155 687H1223L1192 789H1226.500L1267 658H1198L1254.500 474z" fill={CX} />
    <path d="M917.500 789H952L997 882H963zM983.500 687H1052L1098 779H1029zM1083 585H1186L1158 677H1129zM1155 687H1223L1197 772zM1192 789H1226.500L1272 882H1237.500z" fill={MD} />
    <path d="M983.500 687L1029 779 997 882 952 789zM1052 687L1083 585 1129 677 1098 779zM1267 658L1271 664 1312 750 1311.500 755 1272 882 1226.500 789z" fill={DK} />
    <ellipse cx="992.500" cy="777.500" rx="8.800" ry="21.500" fill="url(#pin)" />
    <ellipse cx="1267" cy="777.500" rx="9" ry="21.500" fill="url(#pin)" />
    <path d="M1052.800 438.400L1085.800 508.300A93.200 66.900 -25.400 0 0 1254.200 428.300L1221.200 358.400z" fill="url(#tube)" />
    <ellipse {...rim} transform="translate(1137 398.400) rotate(-25.400)" fill={CX} />
    <path d="M1060.100 389L1077.600 426.200A65.200 46.800 -25.400 0 0 1195.400 370.200L1177.900 333z" fill="url(#boss)" />
    <ellipse rx="65.200" ry="46.800" transform="translate(1119 361) rotate(-25.400)" fill={CX} />
    <ellipse rx="37.300" ry="26.800" transform="translate(1118.500 360.800) rotate(-25.400)" fill="url(#bore)" />
    <path d="M1131 371h1v1h-1zM1139 369h1v1h-1zM1107 388h1v1h-1z" fill={CX} />
  </svg>
);
const ModelFrame = styled.div`
  align-self: flex-start;
  margin: 40px 0 0 550px;
  height: 640px;
`;

/* ---------- status bar ---------- */
const Status = styled.footer`
  height: 38px;
  flex: none;
  display: flex;
  align-items: flex-start;
  background: #f6fafb;
  border-top: 1px solid #a9b9ba;
  padding: 6px 14px 0 7px;
  position: relative;
`;
const StatusBox = styled.div`
  display: flex;
  align-items: center;
  justify-content: center;
  width: 26px;
  height: 26px;
  padding-left: 5px;
  margin: 4px 7px 0 0;
  background: #dddfe0;
  border: 1px solid #a9adae;
`;
const StatusIcon = styled.div`
  margin: 7px 10px 0 0;
`;
const StatusLine = styled(VLine)`
  margin-top: 4px;
`;
const FindBox = styled.div`
  display: flex;
  align-items: stretch;
  width: 51px;
  height: 30px;
  margin-left: 2px;
  border: 1px solid #bfc4c5;
  background: #fdfdfd;
`;
const FindPart = styled.div`
  display: grid;
  place-items: center;
  width: ${(p) => p.$w}px;
  border-left: ${(p) => (p.$line ? "1px solid #bfc4c5" : "0")};
`;
const Push = styled.div`
  margin-left: auto;
  display: flex;
`;
const Combo = styled.div`
  display: flex;
  width: 217px;
  height: 28px;
  margin: 1px 0 0 119px;
  border: 1px solid #a3a7a9;
  background: #f8f9f9;
  font-size: 14.500px;
  letter-spacing: -0.250px;
  line-height: 27px;
  color: #4a4e50;
`;
const ComboText = styled.span`
  flex: 1;
  padding-left: 8px;
`;
const ComboArrow = styled.span`
  width: 19px;
  display: grid;
  place-items: center;
  border-left: 1px solid #a3a7a9;
`;
const Tooltip = styled.div`
  position: absolute;
  left: 804px;
  top: 16px;
  width: 53px;
  height: 26px;
  background: #fff;
  border: 1px solid #777a7b;
  box-shadow: 3px 3px 2px rgba(0, 0, 0, 0.4);
  text-align: center;
  font-size: 14.500px;
  letter-spacing: -0.100px;
  line-height: 24px;
  color: #555;
`;

export default function App() {
  return (
    <Screen>
      <Global />
      <TitleBar>
        <QuickBar>
          <Slot $w={28} $justify="flex-start"><Icon name="part" /></Slot>
          <Slot $w={49} $justify="flex-start"><Logo>creo</Logo><LogoDot /></Slot>
          <VLine $ml={13} $mr={8} />
          <Slot $w={22}><Icon name="fileNew" /></Slot>
          <Slot $w={36}><Icon name="open" /></Slot>
          <Slot $w={26}><Icon name="save" /></Slot>
          <Slot $w={34}><Icon name="undo" /></Slot>
          <Slot $w={10}><Arrow $mb={2} /></Slot>
          <Slot $w={40}><Icon name="redo" /></Slot>
          <Slot $w={8}><Arrow $mb={2} $c="#a9adae" /></Slot>
          <Slot $w={35}><Icon name="regenSmall" w={21} /></Slot>
          <Slot $w={25}><Icon name="windows" /></Slot>
          <Slot $w={24}><Arrow $mb={2} /></Slot>
          <Slot $w={24}><Icon name="closeBox" w={18} /></Slot>
          <VLine $ml={3} $mr={9} />
          <svg width="12" height="9" viewBox="0 0 12 9"><path d="M1 1h10" stroke="#3f4345" strokeWidth="1.200" /><path d="M1.500 3.500h9L6 8.500z" fill="#3f4345" /></svg>
        </QuickBar>
        <Title>REVOLVE (Active) - Creo Parametric Student Edition (for educational use only)</Title>
        <WindowButtons>
          <svg width="12" height="12" viewBox="0 0 12 12"><path d="M0 8.500h12" stroke="#747879" strokeWidth="2.400" /></svg>
          <svg width="15" height="14" viewBox="0 0 15 14"><path d="M4.500 4V1.500H14v6h-3M1 5.500h9.500v6.500H1zM1 6.500h9.500" fill="none" stroke="#747879" strokeWidth="1.700" /></svg>
          <svg width="12" height="12" viewBox="0 0 12 12"><path d="M1 1l10 10M11 1L1 11" stroke="#747879" strokeWidth="2.600" /></svg>
        </WindowButtons>
      </TitleBar>

      <TabBar>
        <Tab $w={75} $file>File</Tab>
        <Tab $w={105} $active>Model</Tab>
        <Tab $w={116.5}>Analysis</Tab>
        <Tab $w={172}>Live Simulation</Tab>
        <Tab $w={128}>Annotate</Tab>
        <Tab $w={95}>Tools</Tab>
        <Tab $w={93}>View</Tab>
        <Tab $w={190}>Flexible Modeling</Tab>
        <Tab $w={150}>Applications</Tab>
        <TabTools>
          <Caret width="15" height="10" viewBox="0 0 15 10"><path d="M.5 8.500L7.500 0l7 8.500h-4L7.500 5.500l-3 3z" fill="#fff" /></Caret>
          <SearchBox />
          <SearchButton><Icon name="magnifier" /></SearchButton>
          <Icon name="cap" w={18} />
          <Arrow $c="#fff" $ml={10} $mb={1} />
          <Help>?</Help>
        </TabTools>
      </TabBar>

      <Ribbon>{groups.map((g) => <RibbonGroup key={g.name} g={g} />)}</Ribbon>

      <Work>
        <Sidebar>
          <SideTabs>
            <SideTab $w={124} $pl={12} $gap={9} $active><Icon name="treeIcon" w={17} vb="0 -1 17 22" h={22} />Model Tree</SideTab>
            <SideTab $w={125} $pl={9} $gap={6}><Icon name="folders" w={23} vb="-.5 -1 21 22" /><Fade>Folder Bro</Fade></SideTab>
            <SideTab $w={98} $pl={0} $gap={7}><Icon name="favorites" w={22} />Favorites</SideTab>
          </SideTabs>
          <SideHead>
            <SideTitle>Model Tree</SideTitle>
            <Icon name="tools" w={21} h={25} vb="0 -.5 21 25" />
            <Arrow $ml={11} $mr={11} />
            <Icon name="listDoc" w={21} h={25} vb="0 -.5 21 25" />
            <Arrow $ml={11} $mr={15} />
            <Icon name="treeEye" w={25} h={25} vb="0 -.5 25 25" />
          </SideHead>
          <FilterRow>
            <Icon name="funnel" />
            <FilterInput><svg width="11" height="11" viewBox="0 0 11 11"><path d="M1 1l9 9M10 1l-9 9" stroke="#a6aaab" strokeWidth="1.700" /></svg></FilterInput>
            <Arrow $ml={7} $mr={14} />
            <svg width="14" height="14" viewBox="0 0 14 14"><path d="M7 0v14M0 7h14" stroke="#a3a6a8" strokeWidth="4" /></svg>
          </FilterRow>
          <Tree>
            <Node $root $caps><Icon name="part" w={18} />REVOLVE.PRT</Node>
            {nodes.map(([icon, label, open, off]) => (
              <Node key={label} $off={off} $caps={label.length > 10}><Expander $on={open} /><Icon name={icon} />{label}</Node>
            ))}
          </Tree>
          <InsertLine />
        </Sidebar>
        <Viewport>
          <ViewTools>
            {viewTools.map(([name, more, on]) => (
              <ViewTool key={name} $more={more} $on={on}><Icon name={name} /></ViewTool>
            ))}
          </ViewTools>
          <ModelFrame><PartModel /></ModelFrame>
        </Viewport>
      </Work>

      <Status>
        <StatusBox><Icon name="treeIcon" w={15} h={20} vb="0 -1.500 18 23" /></StatusBox>
        <StatusIcon><Icon name="globe" /></StatusIcon>
        <StatusIcon><Icon name="panel" /></StatusIcon>
        <StatusLine $h={26} $ml={3} />
        <Push>
          <VLine $h={32} $mr={4} />
          <VLine $h={32} />
          <FindBox>
            <FindPart $w={33}><Icon name="binoculars" /></FindPart>
            <FindPart $w={17} $line><Arrow $mb={2} /></FindPart>
          </FindBox>
          <VLine $h={32} $ml={2} />
          <Combo><ComboText>Geometry</ComboText><ComboArrow><Arrow /></ComboArrow></Combo>
        </Push>
        <Tooltip>Office</Tooltip>
      </Status>
    </Screen>
  );
}
